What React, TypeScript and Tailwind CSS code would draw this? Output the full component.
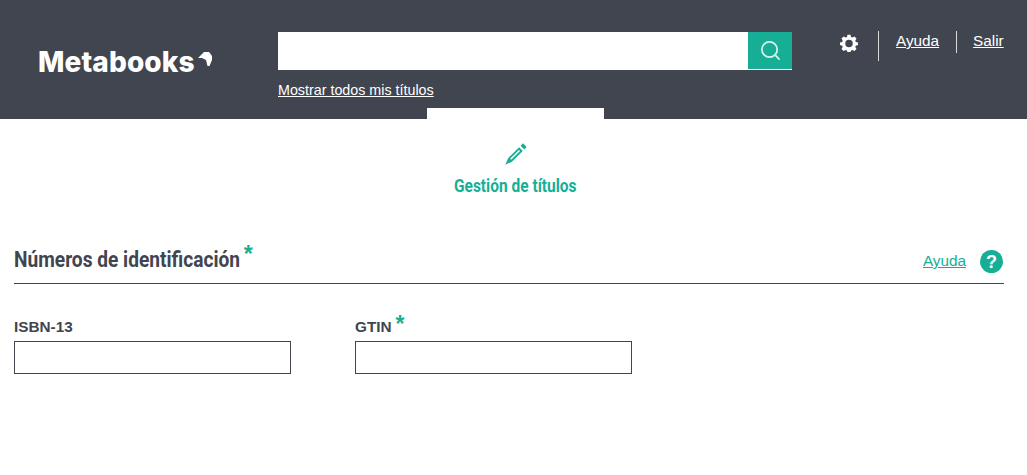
import { Search } from "lucide-react";

const narrow = "font-['Roboto',sans-serif]";

function Star({ className }: { className: string }) {
  return <span className={"text-[#17ae96] font-bold font-['Liberation_Sans',sans-serif] " + className}>*</span>;
}

function Field({ label, required }: { label: string; required?: boolean }) {
  return (
    <div className="w-[277px] flex flex-col">
      <div className="h-[26px] flex items-start">
        <span className="text-[15.3px] leading-[20px] mt-[2px] font-bold text-[#414550]">{label}</span>
        {required && <Star className="text-[23px] leading-[24px] ml-[4px] -mt-[3px]" />}
      </div>
      <input className="w-full h-[33px] border border-[#414550] bg-white" />
    </div>
  );
}

export default function App() {
  return (
    <div className="w-[1027px] h-[475px] overflow-hidden bg-white font-['Liberation_Sans',Arial,sans-serif]">
      <header className="relative h-[119px] bg-[#414550] flex text-white">
        <div className="w-[278px] pl-[38px] pt-[46px] flex items-start shrink-0">
          <span className="font-['Inter',sans-serif] font-extrabold text-[28px] leading-[32px] tracking-[0.1px]">Metabooks</span>
          <svg width="15" height="15" viewBox="0 0 15 15" className="ml-[3px] mt-[6px] shrink-0" fill="#fff">
            <path d="M0 6 L6 0 L11 0 L14 4 L14 8 L11.5 14 L9.5 14 L8 8 L4 6 Z" />
          </svg>
        </div>
        <div className="w-[514px] pt-[32px] shrink-0">
          <div className="flex h-[38px] bg-white">
            <input className="flex-1 min-w-0 bg-white" />
            <button className="w-[44px] h-[37px] bg-[#17ae96] flex items-center justify-center">
              <Search size={23} strokeWidth={1.8} color="#d8f3ee" />
            </button>
          </div>
          <a className="block mt-[11px] text-[14.3px] leading-[18px] underline">Mostrar todos mis títulos</a>
        </div>
        <div className="flex items-start pt-[31px] pl-[48px]">
          <svg width="18" height="18" viewBox="0 0 24 24" className="mt-[3px] shrink-0" fill="#fff">
            <path
              fillRule="evenodd"
              d="M10 1h4l.7 3 1.8.8 2.7-1.6 2.8 2.8-1.6 2.7.7 1.8 3 .7v3.6l-3 .7-.7 1.8 1.6 2.7-2.8 2.8-2.7-1.6-1.8.7-.7 3h-4l-.7-3-1.8-.7-2.7 1.6-2.8-2.8 1.6-2.7-.7-1.8-3-.7v-3.6l3-.7.7-1.8-1.6-2.7 2.8-2.8 2.7 1.6 1.8-.8zM12 7.5a5 5 0 1 0 0 10 5 5 0 0 0 0-10z"
            />
          </svg>
          <div className="w-px h-[30px] bg-white/80 ml-[20px]" />
          <a className="ml-[17px] text-[15.3px] leading-[20px] underline">Ayuda</a>
          <div className="w-px h-[22px] bg-white/80 ml-[17px]" />
          <a className="ml-[16px] text-[15.3px] leading-[20px] underline">Salir</a>
        </div>
        <div className="absolute left-[427px] bottom-0 w-[177px] h-[11px] bg-white" />
      </header>

      <nav className="flex flex-col items-center w-[177px] ml-[427px] pt-[24px]">
        <svg width="22" height="22" viewBox="0 0 24 24" fill="#17ae96">
          <path d="M17 3 L21 7 L23.6 4.4 L19.6 .4 Z" />
          <path fillRule="evenodd" d="M15.4 4.6 L19.4 8.6 L7.6 20.4 L.4 23.6 L3.6 16.4 Z M15.2 7.6 L5.6 17.2 L6.8 18.4 L16.4 8.8 Z" />
        </svg>
        <span className={narrow + " mt-[11px] text-[17.5px] leading-[20px] font-bold text-[#17ae96] whitespace-nowrap scale-x-[0.885]"}>Gestión de títulos</span>
      </nav>

      <section className="pl-[14px] pr-[23px] pt-[46px]">
        <div className="h-[42px] flex items-start justify-between border-b border-[#414550]">
          <div className="flex items-start mt-[6px]">
            <h2 className={narrow + " text-[22px] leading-[24px] font-bold text-[#414550] whitespace-nowrap scale-x-[0.87] origin-left"}>Números de identificación</h2>
            <Star className="text-[23px] leading-[24px] -ml-[30px] -mt-[6px]" />
          </div>
          <div className="flex items-start">
            <a className="text-[15.3px] leading-[20px] mt-[9px] underline text-[#17ae96]">Ayuda</a>
            <div className="ml-[14px] mt-[8px] w-[23px] h-[23px] mr-[1px] rounded-full bg-[#17ae96] text-white flex items-center justify-center text-[18px] leading-none font-bold">?</div>
          </div>
        </div>
        <div className="flex gap-[64px] mt-[31px]">
          <Field label="ISBN-13" />
          <Field label="GTIN" required />
        </div>
      </section>
    </div>
  );
}
